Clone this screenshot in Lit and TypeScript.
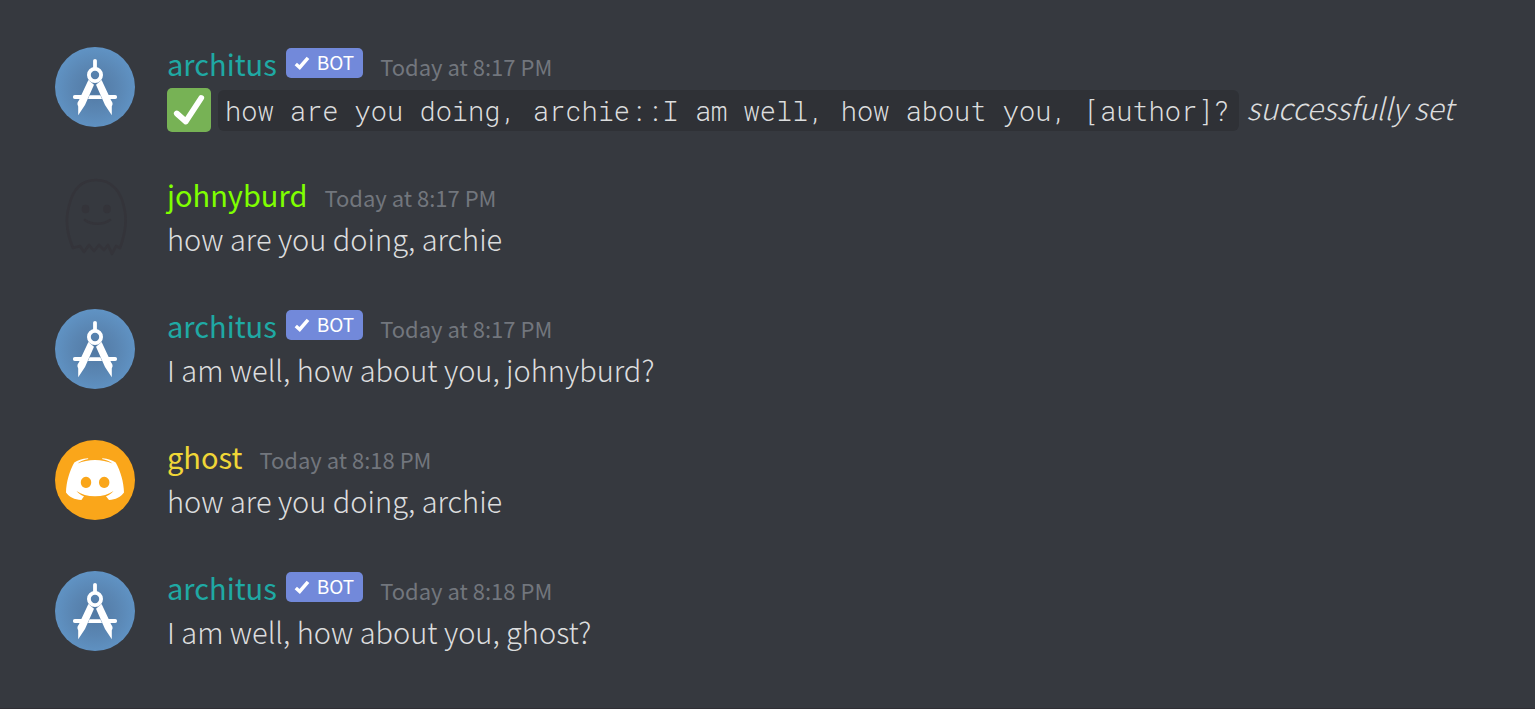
import { LitElement, html, css, svg, nothing, type TemplateResult } from "lit";
import { customElement, property } from "lit/decorators.js";

type AvatarKind = "compass" | "ghost" | "discord";

interface ChatMessage {
  author: string;
  tone: string;
  avatar: AvatarKind;
  bot: boolean;
  time: string;
  body: TemplateResult | string;
}

const avatars = {
  compass: svg`
    <defs>
      <radialGradient id="sky" cx="50%" cy="52%" r="52%">
        <stop offset="0" stop-color="#5279a3" />
        <stop offset="0.55" stop-color="#5a86b3" />
        <stop offset="1" stop-color="#6093c4" />
      </radialGradient>
    </defs>
    <circle cx="40" cy="40" r="40" fill="url(#sky)" />
    <circle cx="40" cy="28" r="6.1" fill="none" stroke="#fff" stroke-width="3.8" />
    <path d="M40 13.8V21" stroke="#fff" stroke-width="3.8" stroke-linecap="round" />
    <path d="M19.8 50H29M60.2 50H51" stroke="#fff" stroke-width="3.8" stroke-linecap="round" />
    <path d="M34.6 48.2h10.8l1.6 3.7H33z" fill="#fff" />
    <path d="M33.4 33L24.6 51.8c-.3 1.6-2.3 3-2.2 5.2 .1 1.3 .8 1.6 .8 2.8V68.3L30 58L39 37.8z" fill="#fff" />
    <path d="M46.6 33L55.4 51.8c.3 1.6 2.3 3 2.2 5.2-.1 1.3-.8 1.6-.8 2.8V68.3L50 58L41 37.8z" fill="#fff" />`,
  ghost: svg`
    <g fill="none" stroke="#34343a" stroke-width="2.6" stroke-linecap="round" stroke-linejoin="round">
      <path d="M18 70C12 56 10 42 14 28C18 10 28 2 41 2C57 2 66 14 69 29C73 44 69 59 65 70L61 68L57 76L53 67L49 72L44 67L39 73L34 67L29 74L25 68Z" />
      <path d="M30 42c6 5 18 5 25 0" />
    </g>
    <ellipse cx="30.5" cy="31" rx="3.8" ry="4.3" fill="#34343a" />
    <ellipse cx="52" cy="31" rx="3.8" ry="4.3" fill="#34343a" />`,
  discord: svg`
    <circle cx="40" cy="40" r="40" fill="#faa61a" />
    <path fill="#fff" fill-rule="evenodd" d="M33 18.2C27 18.5 22.5 20.2 19.3 22.6C14.5 31 11.3 42 11 52.6C14 57 19.5 60 26.4 60L29 56.3C26.5 55.3 23.5 53.5 21.5 51C26.5 54.6 32.5 56.2 40 56.2S53.5 54.6 58.5 51C56.5 53.5 53.5 55.3 51 56.3L54 60C60.5 60 66 57 69 52.6C68.7 42 65.5 31 60.7 22.6C57.5 20.2 53 18.5 47.5 18.2L47 19C51 19.8 55 21.5 57.5 23.6C47 18.8 33 18.8 22.5 23.6C25 21.5 29 19.8 33.3 19zM31 36.8a5.2 5.6 0 1 0 .01 0zM49.2 36.8a5.2 5.6 0 1 0 .01 0z" />`,
};

@customElement("bot-badge")
class BotBadge extends LitElement {
  static styles = css`
    :host {
      display: flex;
      align-items: center;
      gap: 7px;
      height: 30px;
      padding: 0 9px 0 8px;
      border-radius: 5px;
      background: #7289da;
      color: #fff;
      font-size: 19px;
      line-height: 26px;
    }
    svg {
      display: block;
      width: 16px;
      height: 14px;
    }
    span {
      padding-bottom: 2px;
    }
  `;
  render() {
    return html`<svg viewBox="0 0 16 14" aria-hidden="true">
        <path d="M1.8 8L5.7 11.5L14 1.8" fill="none" stroke="#fff" stroke-width="3.5" />
      </svg>
      <span>BOT</span>`;
  }
}

@customElement("chat-message")
class ChatMessageRow extends LitElement {
  static styles = css`
    :host {
      display: flex;
      gap: 32px;
    }
    .avatar {
      flex: none;
      width: 80px;
      height: 80px;
      overflow: visible;
    }
    .content {
      flex: 1;
      min-width: 0;
      display: flex;
      flex-direction: column;
      gap: 6px;
    }
    .header {
      display: flex;
      align-items: baseline;
      height: 34px;
      line-height: 33px;
    }
    .author {
      font-size: 29px;
      font-weight: 400;
    }
    .teal { color: #1fa9a4; }
    .lime { color: #7fff00; }
    .gold { color: #f0d637; }
    bot-badge {
      align-self: flex-start;
      margin: 1px 0 0 9px;
    }
    time {
      margin-left: 17px;
      font-size: 22px;
      color: #72767d;
    }
    .body {
      font-size: 29px;
      font-weight: 300;
      line-height: 40px;
      color: #dcddde;
    }
    .reply {
      display: flex;
      align-items: flex-start;
      white-space: nowrap;
    }
    .tick {
      flex: none;
      width: 44px;
      height: 44px;
      margin: 1px 7px -5px 0;
    }
    code {
      margin: 3px 0 -4px;
      padding: 0 9px 0 7px;
      border-radius: 6px;
      background: #2f3136;
      font: 300 27px/41px "Roboto Mono", "DejaVu Sans Mono", monospace;
    }
    em {
      margin-left: 8px;
      font-size: 30px;
    }
  `;

  @property({ attribute: false }) message!: ChatMessage;

  render() {
    const m = this.message;
    return html`
      <svg class="avatar" viewBox="0 0 80 80" role="img" aria-label=${m.author}>${avatars[m.avatar]}</svg>
      <div class="content">
        <div class="header">
          <span class="author ${m.tone}">${m.author}</span>
          ${m.bot ? html`<bot-badge></bot-badge>` : nothing}
          <time>${m.time}</time>
        </div>
        <div class="body">${m.body}</div>
      </div>
    `;
  }
}

const messages: ChatMessage[] = [
  {
    author: "architus",
    tone: "teal",
    avatar: "compass",
    bot: true,
    time: "Today at 8:17 PM",
    body: html`<div class="reply">
      <svg class="tick" viewBox="0 0 44 44" aria-hidden="true">
        <rect width="44" height="44" rx="5" fill="#77b255" />
        <path d="M9.8 25.5L18.8 33.5L34.2 10" fill="none" stroke="#fff" stroke-width="5.8" stroke-linecap="round" stroke-linejoin="round" />
      </svg>
      <code>how are you doing, archie::I am well, how about you, [author]?</code>
      <em>successfully set</em>
    </div>`,
  },
  { author: "johnyburd", tone: "lime", avatar: "ghost", bot: false, time: "Today at 8:17 PM", body: "how are you doing, archie" },
  { author: "architus", tone: "teal", avatar: "compass", bot: true, time: "Today at 8:17 PM", body: "I am well, how about you, johnyburd?" },
  { author: "ghost", tone: "gold", avatar: "discord", bot: false, time: "Today at 8:18 PM", body: "how are you doing, archie" },
  { author: "architus", tone: "teal", avatar: "compass", bot: true, time: "Today at 8:18 PM", body: "I am well, how about you, ghost?" },
];

@customElement("app-root")
class AppRoot extends LitElement {
  static styles = css`
    :host {
      display: block;
      box-sizing: border-box;
      min-height: 100vh;
      padding: 47px 55px;
      border-bottom: 1px solid #302f35;
      background: #36393f;
      font-family: "Noto Sans CJK SC", "Noto Sans", sans-serif;
    }
    main {
      display: flex;
      flex-direction: column;
      gap: 51px;
    }
  `;
  render() {
    return html`<main>${messages.map((m) => html`<chat-message .message=${m}></chat-message>`)}</main>`;
  }
}
